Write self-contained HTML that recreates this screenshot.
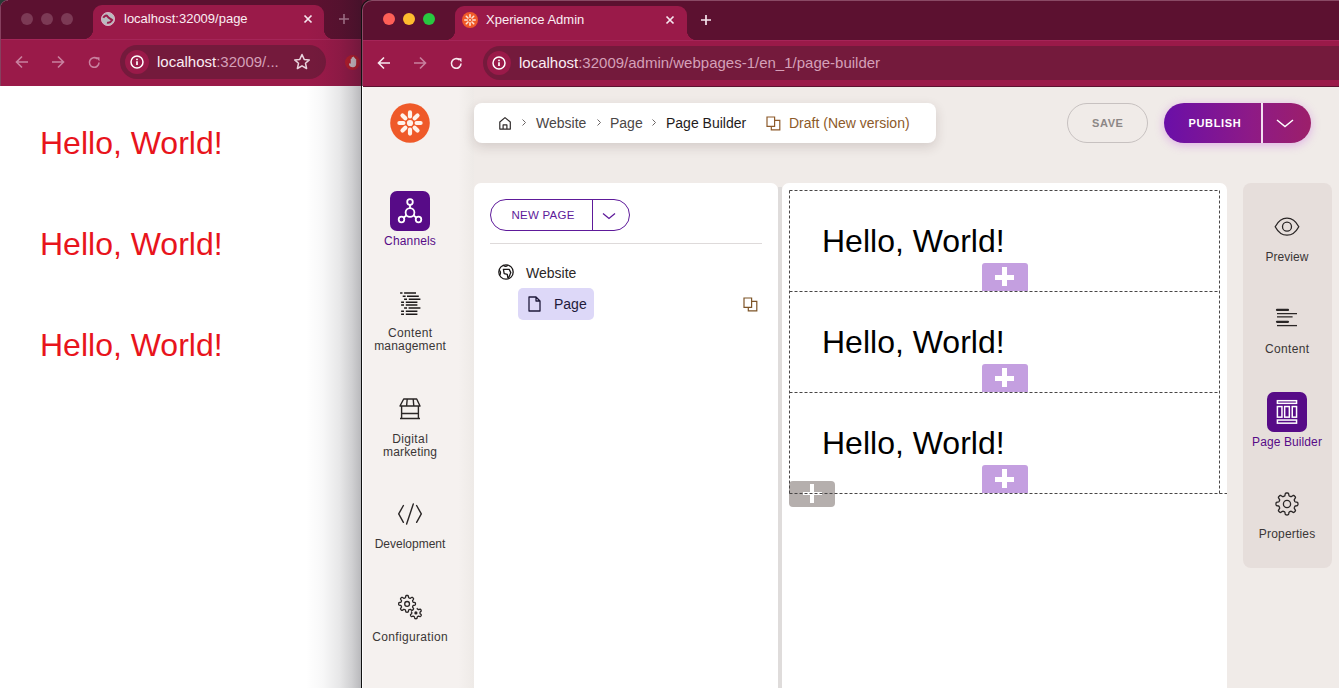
<!DOCTYPE html>
<html><head><meta charset="utf-8">
<style>
*{box-sizing:border-box;margin:0;padding:0}
html,body{width:1339px;height:688px;overflow:hidden;background:#fff;font-family:"Liberation Sans",sans-serif}
.abs{position:absolute}
.t{position:absolute;white-space:nowrap;font-family:"Liberation Sans",sans-serif}
svg{position:absolute;overflow:visible}
</style></head><body>

<!-- ============ LEFT WINDOW ============ -->
<div class="abs" id="lw" style="left:0;top:0;width:380px;height:688px;overflow:hidden">
  <div class="abs" style="left:0;top:0;width:380px;height:39px;background:#5c1130"></div>
  <!-- traffic (inactive) -->
  <div class="abs" style="left:21px;top:13px;width:12px;height:12px;border-radius:50%;background:#7c3a55"></div>
  <div class="abs" style="left:41px;top:13px;width:12px;height:12px;border-radius:50%;background:#7c3a55"></div>
  <div class="abs" style="left:61px;top:13px;width:12px;height:12px;border-radius:50%;background:#7c3a55"></div>
  <!-- active tab -->
  <div class="abs" style="left:93px;top:5px;width:231px;height:35px;background:#9a1a49;border-radius:9px 9px 0 0"></div>
  <div class="abs" style="left:83px;top:29px;width:10px;height:10px;background:radial-gradient(circle at 0 0,#5c1130 10px,#9a1a49 10.5px)"></div>
  <div class="abs" style="left:324px;top:29px;width:10px;height:10px;background:radial-gradient(circle at 100% 0,#5c1130 10px,#9a1a49 10.5px)"></div>
  <svg style="left:100px;top:11px" width="16" height="16" viewBox="0 0 16 16"><circle cx="8" cy="8" r="6.6" fill="#b9bcc0" stroke="#d9a9bd" stroke-width="1"/><path d="M3.3 6.8C4.5 4.6 6.5 3.8 7.6 5.6C8.4 7 10 7.4 12.2 9C11 11 9.4 12.2 7 11.6" stroke="#9a1a49" stroke-width="2" fill="none" stroke-linejoin="round"/></svg>
  <div class="t" style="left:124px;top:11px;font-size:13px;color:#fbeef3">localhost:32009/page</div>
  <svg style="left:304px;top:15px" width="8" height="8" viewBox="0 0 8 8"><path d="M0.5 0.5L7.5 7.5M7.5 0.5L0.5 7.5" stroke="#f6e6ee" stroke-width="1.7"/></svg>
  <svg style="left:339px;top:14px" width="10" height="10" viewBox="0 0 10 10"><path d="M5 0V10M0 5H10" stroke="#b07b92" stroke-width="1.6"/></svg>
  <!-- toolbar -->
  <div class="abs" style="left:0;top:39px;width:380px;height:47px;background:#9a1a49"></div><div class="abs" style="left:0;top:39px;width:380px;height:1px;background:#a52558"></div>
  <svg style="left:15px;top:55px" width="14" height="14" viewBox="0 0 14 14"><path d="M13 7H1.5M7 1.5L1.5 7L7 12.5" stroke="#c9819f" stroke-width="1.6" fill="none"/></svg>
  <svg style="left:51px;top:55px" width="14" height="14" viewBox="0 0 14 14"><path d="M1 7H12.5M7 1.5L12.5 7L7 12.5" stroke="#c9819f" stroke-width="1.6" fill="none"/></svg>
  <svg style="left:88px;top:56px" width="13" height="13" viewBox="0 0 13 13"><path d="M11 6.5A4.8 4.8 0 1 1 9.3 2.8" stroke="#c9819f" stroke-width="1.6" fill="none"/><path d="M7.5 1.2H11.5V5.2Z" fill="#c9819f"/></svg>
  <div class="abs" style="left:120px;top:45px;width:206px;height:33.5px;border-radius:17px;background:#741a3c"></div>
  <div class="abs" style="left:125px;top:50px;width:24px;height:24px;border-radius:50%;background:#9a1a49"></div>
  <svg style="left:129px;top:54px" width="16" height="16" viewBox="0 0 16 16"><circle cx="8" cy="8" r="6" stroke="#fff" stroke-width="1.5" fill="none"/><circle cx="8" cy="5.4" r="0.9" fill="#fff"/><path d="M8 7.2V11" stroke="#fff" stroke-width="1.7"/></svg>
  <div class="t" style="left:157px;top:53px;font-size:15px;color:#fbeef3">localhost<span style="color:#d5a0b8">:32009/...</span></div>
  <svg style="left:293px;top:53px" width="18" height="18" viewBox="0 0 18 18"><path d="M9 1.5L11.2 6.4L16.3 6.9L12.5 10.3L13.6 15.5L9 12.8L4.4 15.5L5.5 10.3L1.7 6.9L6.8 6.4Z" stroke="#ead4de" stroke-width="1.5" fill="none" stroke-linejoin="round"/></svg>
  <div class="abs" style="left:344.5px;top:54.6px;width:15.6px;height:15.6px;border-radius:50%;background:#bd1c2c"></div>
  <svg style="left:346px;top:55px" width="14" height="14" viewBox="0 0 14 14"><path d="M4.2 11.5C3.2 10.5 2.6 9 3.4 8.3C3.9 7.9 4.5 8.4 4.7 8.8V4.2C4.7 3.4 5.8 3.4 5.8 4.2V2.6C5.8 1.8 6.9 1.8 6.9 2.6V2.2C6.9 1.4 8 1.4 8 2.2V3C8 2.2 9.1 2.2 9.1 3V4.4C9.1 3.6 10.2 3.6 10.2 4.4V8.8C10.2 11 9 12.2 7.2 12.2C5.8 12.2 4.9 12.1 4.2 11.5Z" fill="#d9c8d0"/></svg>
  <div class="abs" style="left:0;top:6px;width:1px;height:80px;background:#86405f"></div>
  <div class="abs" style="left:0;top:0;width:8px;height:8px;background:radial-gradient(circle at 100% 100%,rgba(0,0,0,0) 7px,#86405f 7.5px,#2a3a36 8.5px)"></div>
  <!-- content -->
  <div class="abs" style="left:0;top:86px;width:362px;height:602px;background:#fff"></div>
  <div class="t" style="left:40px;top:125px;font-size:32px;color:#e8141c">Hello, World!</div>
  <div class="t" style="left:40px;top:226px;font-size:32px;color:#e8141c">Hello, World!</div>
  <div class="t" style="left:40px;top:327px;font-size:32px;color:#e8141c">Hello, World!</div>
  <!-- shadow from right window -->
  <div class="abs" style="left:306px;top:0;width:56px;height:688px;background:linear-gradient(to right,rgba(20,20,30,0),rgba(20,20,30,0.03) 30%,rgba(20,20,30,0.10) 60%,rgba(20,20,30,0.2) 82%,rgba(20,20,30,0.31))"></div>
</div>

<!-- ============ RIGHT WINDOW ============ -->
<div class="abs" id="rw" style="left:361px;top:-1px;width:978px;height:690px;overflow:hidden;border-top-left-radius:11px;background:#111">
 <div class="abs" style="left:1px;top:1px;width:977px;height:689px;overflow:hidden;border-top-left-radius:10px;background:linear-gradient(#8a4a65 0,#8a4a65 86px,#fff 86px)">
 <div class="abs" style="left:1px;top:1px;width:976px;height:688px;overflow:hidden;border-top-left-radius:9px;background:#5c1130">
  <!-- coordinates inside: x = page - 363, y = page - 1 -->
  <div class="abs" style="left:20px;top:12px;width:12px;height:12px;border-radius:50%;background:#fe5f57"></div>
  <div class="abs" style="left:40px;top:12px;width:12px;height:12px;border-radius:50%;background:#febc2e"></div>
  <div class="abs" style="left:60px;top:12px;width:12px;height:12px;border-radius:50%;background:#28c840"></div>
  <!-- active tab -->
  <div class="abs" style="left:92px;top:5px;width:232px;height:35px;background:#9a1a49;border-radius:9px 9px 0 0"></div>
  <div class="abs" style="left:82px;top:29px;width:10px;height:10px;background:radial-gradient(circle at 0 0,#5c1130 10px,#9a1a49 10.5px)"></div>
  <div class="abs" style="left:324px;top:29px;width:10px;height:10px;background:radial-gradient(circle at 100% 0,#5c1130 10px,#9a1a49 10.5px)"></div>
  <svg style="left:99px;top:11px" width="16" height="16" viewBox="0 0 16 16"><circle cx="8" cy="8" r="8" fill="#f05a28"/><g stroke="#fde3d3" stroke-width="1.6" stroke-linecap="round"><path d="M8 2.8V5.2M8 10.8V13.2M2.8 8H5.2M10.8 8H13.2M4.3 4.3L6 6M10 10L11.7 11.7M11.7 4.3L10 6M6 10L4.3 11.7"/></g><circle cx="8" cy="8" r="1" fill="#fde3d3"/></svg>
  <div class="t" style="left:123px;top:11px;font-size:13px;color:#fbeef3">Xperience Admin</div>
  <svg style="left:303px;top:15px" width="8" height="8" viewBox="0 0 8 8"><path d="M0.5 0.5L7.5 7.5M7.5 0.5L0.5 7.5" stroke="#f6e6ee" stroke-width="1.7"/></svg>
  <svg style="left:338px;top:14px" width="10" height="10" viewBox="0 0 10 10"><path d="M5 0V10M0 5H10" stroke="#f6e6ee" stroke-width="1.7"/></svg>
  <!-- toolbar -->
  <div class="abs" style="left:0;top:39px;width:976px;height:46px;background:#9a1a49"></div><div class="abs" style="left:0;top:39px;width:976px;height:1px;background:#a52558"></div>
  <svg style="left:14px;top:55px" width="14" height="14" viewBox="0 0 14 14"><path d="M13 7H1.5M7 1.5L1.5 7L7 12.5" stroke="#f8e9ef" stroke-width="1.6" fill="none"/></svg>
  <svg style="left:50px;top:55px" width="14" height="14" viewBox="0 0 14 14"><path d="M1 7H12.5M7 1.5L12.5 7L7 12.5" stroke="#c9819f" stroke-width="1.6" fill="none"/></svg>
  <svg style="left:87px;top:56px" width="13" height="13" viewBox="0 0 13 13"><path d="M11 6.5A4.8 4.8 0 1 1 9.3 2.8" stroke="#f8e9ef" stroke-width="1.6" fill="none"/><path d="M7.5 1.2H11.5V5.2Z" fill="#f8e9ef"/></svg>
  <div class="abs" style="left:120px;top:45px;width:900px;height:34px;border-radius:17px;background:#741a3c"></div>
  <div class="abs" style="left:124px;top:50px;width:24px;height:24px;border-radius:50%;background:#9a1a49"></div>
  <svg style="left:128px;top:54px" width="16" height="16" viewBox="0 0 16 16"><circle cx="8" cy="8" r="6" stroke="#fff" stroke-width="1.5" fill="none"/><circle cx="8" cy="5.4" r="0.9" fill="#fff"/><path d="M8 7.2V11" stroke="#fff" stroke-width="1.7"/></svg>
  <div class="t" style="left:156px;top:53px;font-size:15px;color:#fbeef3">localhost<span style="color:#d5a0b8">:32009/admin/webpages-1/en_1/page-builder</span></div>

  <!-- admin content -->
  <div class="abs" id="adm" style="left:0;top:86px;width:976px;height:601px;background:#f0ebe8;overflow:hidden">
   <!-- adm coords: x = page-363, y = page-87 -->
   <div class="abs" style="left:0;top:0;width:111px;height:601px;background:linear-gradient(to right,#f5f1ef 0,#f5f1ef 86%,#eeeae7 100%)"></div>
   <!-- logo -->
   <svg style="left:27px;top:15.5px" width="40" height="40" viewBox="0 0 40 40"><circle cx="20" cy="20" r="19.8" fill="#ef5a29"/><path d="M20.00 13.40L20.00 9.40M24.67 15.33L27.50 12.50M26.60 20.00L30.60 20.00M24.67 24.67L27.50 27.50M20.00 26.60L20.00 30.60M15.33 24.67L12.50 27.50M13.40 20.00L9.40 20.00M15.33 15.33L12.50 12.50" stroke="#fff3ea" stroke-width="4.2" stroke-linecap="round"/><circle cx="20" cy="20" r="3.1" fill="#fff3ea"/></svg>
   <!-- breadcrumb card -->
   <div class="abs" style="left:111px;top:16px;width:462px;height:40px;background:#fff;border-radius:8px;box-shadow:0 4px 12px rgba(60,40,40,0.16)"></div>
   <svg style="left:135px;top:29px" width="14" height="14" viewBox="0 0 14 14"><path d="M1.8 6L7 1.6L12.3 6V13.1H1.8Z M5.1 13.1V8.9H8.9V13.1" stroke="#2e2a2a" stroke-width="1.2" fill="none" stroke-linejoin="round"/></svg>
   <svg style="left:158px;top:31px" width="6" height="9" viewBox="0 0 6 9"><path d="M1.5 1.5L4.5 4.5L1.5 7.5" stroke="#6a6565" stroke-width="1" fill="none"/></svg>
   <div class="t" style="left:173px;top:28px;font-size:14px;color:#4a4646">Website</div>
   <svg style="left:233px;top:31px" width="6" height="9" viewBox="0 0 6 9"><path d="M1.5 1.5L4.5 4.5L1.5 7.5" stroke="#6a6565" stroke-width="1" fill="none"/></svg>
   <div class="t" style="left:247px;top:28px;font-size:14px;color:#4a4646">Page</div>
   <svg style="left:288px;top:31px" width="6" height="9" viewBox="0 0 6 9"><path d="M1.5 1.5L4.5 4.5L1.5 7.5" stroke="#6a6565" stroke-width="1" fill="none"/></svg>
   <div class="t" style="left:303px;top:28px;font-size:14px;color:#1e1b1b">Page Builder</div>
   <svg style="left:403px;top:29px" width="15" height="15" viewBox="0 0 15 15"><path d="M1 1H8.6V10.3H1Z M8.6 4.3H13.8V13.8H5.3V10.3" stroke="#8d5a2a" stroke-width="1.2" fill="none"/></svg>
   <div class="t" style="left:426px;top:28px;font-size:14px;color:#8d5a2a">Draft (New version)</div>
   <!-- SAVE -->
   <div class="abs" style="left:704px;top:16px;width:81px;height:40px;border:1px solid #c7c1c0;border-radius:20px"></div>
   <div class="t" style="left:729px;top:30px;font-size:11px;font-weight:700;color:#8c8786;letter-spacing:0.6px">SAVE</div>
   <!-- PUBLISH -->
   <div class="abs" style="left:801px;top:16px;width:147px;height:40px;border-radius:20px;background:linear-gradient(to right,#6a0fa8,#8e1a86 60%,#9c1f6a);box-shadow:0 2px 10px rgba(190,60,220,0.35)"></div>
   <div class="abs" style="left:898px;top:16px;width:1.5px;height:40px;background:#f3dff0"></div>
   <div class="t" style="left:825.5px;top:30px;font-size:11px;font-weight:700;color:#fff;letter-spacing:0.65px">PUBLISH</div>
   <svg style="left:913px;top:32px" width="18" height="9" viewBox="0 0 18 9"><path d="M1 1L9 7.5L17 1" stroke="#fff" stroke-width="1.5" fill="none"/></svg>

   <!-- LEFT NAV -->
   <div class="abs" style="left:27px;top:104px;width:40px;height:40px;border-radius:7px;background:#570b87"></div>
   <svg style="left:27px;top:104px" width="40" height="40" viewBox="0 0 40 40"><g stroke="#fff" stroke-width="1.8" fill="none"><circle cx="20" cy="21.5" r="4.4"/><circle cx="20" cy="11" r="2.8"/><circle cx="11.5" cy="28.5" r="2.8"/><circle cx="28.5" cy="28.5" r="2.8"/><path d="M20 13.8V17.1M13.6 26.8L16.6 24.3M26.4 26.8L23.4 24.3"/></g></svg>
   <div class="t" style="left:-3px;top:147px;width:100px;text-align:center;font-size:12px;color:#570b87;letter-spacing:0.15px;text-indent:0.15px">Channels</div>

   <svg style="left:33px;top:202px" width="28" height="28" viewBox="0 0 28 28"><g stroke="#1c1919" stroke-width="1.5" fill="none"><path d="M4.1 4.1H6.5M8.1 4.1H20.0"/><path d="M6.7 7.2H9.6M11.0 7.2H22.8"/><path d="M8.1 10.2H11.0M12.8 10.2H24.4"/><path d="M5.1 13.2H8.0M9.8 13.2H21.4"/><path d="M5.1 16.1H8.0M9.8 16.1H21.4"/><path d="M8.1 19.1H11.0M12.6 19.1H24.4"/><path d="M5.1 22.2H8.0M9.8 22.2H21.4"/><path d="M5.1 25.2H8.0M9.8 25.2H21.4"/></g></svg>
   <div class="t" style="left:-3px;top:239px;width:100px;text-align:center;font-size:12px;color:#3a3636;letter-spacing:0.35px;text-indent:0.35px">Content</div>
   <div class="t" style="left:-3px;top:252px;width:100px;text-align:center;font-size:12px;color:#3a3636;letter-spacing:0.18px;text-indent:0.18px">management</div>

   <svg style="left:36px;top:311px" width="22" height="22" viewBox="0 0 22 22"><g stroke="#2a2626" stroke-width="1.4" fill="none" stroke-linejoin="round"><path d="M4.7 1H17.7L21 8H1Z"/><path d="M8.2 1L7.6 8M14.2 1L14.8 8"/><path d="M2.6 8V20.5M19.4 8V20.5M2.6 15.5H19.4M1 20.5H21"/></g></svg>
   <div class="t" style="left:-3px;top:345px;width:100px;text-align:center;font-size:12px;color:#3a3636;letter-spacing:0.38px;text-indent:0.38px">Digital</div>
   <div class="t" style="left:-3px;top:358px;width:100px;text-align:center;font-size:12px;color:#3a3636;letter-spacing:0.17px;text-indent:0.17px">marketing</div>

   <svg style="left:35px;top:417px" width="24" height="22" viewBox="0 0 24 22"><g stroke="#2a2626" stroke-width="1.4" fill="none" stroke-linejoin="round" stroke-linecap="round"><path d="M5.4 1.5L0.7 9.9L5.4 18.3M18.6 1.5L23.3 9.9L18.6 18.3M15.3 0L8.6 20"/></g></svg>
   <div class="t" style="left:-3px;top:450px;width:100px;text-align:center;font-size:12px;color:#3a3636;letter-spacing:0px;text-indent:0px">Development</div>

   <svg style="left:33px;top:506px" width="28" height="28" viewBox="0 0 28 28"><g stroke="#2a2626" stroke-width="1.3" fill="none" stroke-linejoin="round"><path d="M19.5 10.9 L19.4 11.3 L19.4 11.7 L19.1 12.0 L18.2 12.3 L17.3 12.4 L17.0 12.7 L16.9 12.9 L16.8 13.2 L16.7 13.5 L16.6 13.8 L16.6 14.2 L17.1 14.9 L17.6 15.7 L17.5 16.2 L17.3 16.5 L17.0 16.8 L16.7 17.1 L16.4 17.3 L15.9 17.4 L15.1 16.9 L14.4 16.4 L14.0 16.4 L13.7 16.5 L13.4 16.6 L13.1 16.7 L12.9 16.8 L12.6 17.1 L12.5 18.0 L12.2 18.9 L11.9 19.2 L11.5 19.2 L11.1 19.3 L10.6 19.2 L10.2 19.2 L9.9 18.9 L9.6 18.0 L9.5 17.1 L9.2 16.8 L9.0 16.7 L8.7 16.6 L8.4 16.5 L8.1 16.4 L7.7 16.4 L7.0 16.9 L6.2 17.4 L5.8 17.3 L5.4 17.1 L5.1 16.8 L4.8 16.5 L4.6 16.2 L4.5 15.7 L5.0 14.9 L5.5 14.2 L5.5 13.8 L5.4 13.5 L5.3 13.2 L5.2 12.9 L5.1 12.7 L4.8 12.4 L3.9 12.3 L3.0 12.0 L2.7 11.7 L2.7 11.3 L2.7 10.9 L2.7 10.4 L2.7 10.0 L3.0 9.7 L3.9 9.4 L4.8 9.3 L5.1 9.0 L5.2 8.8 L5.3 8.5 L5.4 8.2 L5.5 7.9 L5.5 7.5 L5.0 6.8 L4.5 6.0 L4.6 5.6 L4.8 5.2 L5.1 4.9 L5.4 4.6 L5.8 4.4 L6.2 4.3 L7.0 4.8 L7.7 5.3 L8.1 5.3 L8.4 5.2 L8.7 5.1 L9.0 5.0 L9.2 4.9 L9.5 4.6 L9.6 3.7 L9.9 2.8 L10.2 2.5 L10.6 2.5 L11.1 2.5 L11.5 2.5 L11.9 2.5 L12.2 2.8 L12.5 3.7 L12.6 4.6 L12.9 4.9 L13.1 5.0 L13.4 5.1 L13.7 5.2 L14.0 5.3 L14.4 5.3 L15.1 4.8 L15.9 4.3 L16.4 4.4 L16.7 4.6 L17.0 4.9 L17.3 5.2 L17.5 5.6 L17.6 6.0 L17.1 6.8 L16.6 7.5 L16.6 7.9 L16.7 8.2 L16.8 8.5 L16.9 8.8 L17.0 9.0 L17.3 9.3 L18.2 9.4 L19.1 9.7 L19.4 10.0 L19.4 10.4 L19.5 10.9Z"/><circle cx="11.1" cy="10.9" r="2.4"/><path d="M21.1 15.0 L21.3 15.7 L21.4 16.0 L21.7 16.2 L21.9 16.3 L22.1 16.4 L22.4 16.6 L22.7 16.6 L23.4 16.3 L24.1 16.1 L24.5 16.3 L24.8 16.6 L25.0 16.9 L25.1 17.2 L25.3 17.6 L25.2 18.0 L24.7 18.6 L24.1 19.0 L24.0 19.3 L24.0 19.6 L24.0 19.9 L24.0 20.1 L24.0 20.4 L24.1 20.7 L24.7 21.1 L25.2 21.7 L25.3 22.1 L25.1 22.5 L25.0 22.8 L24.8 23.1 L24.5 23.4 L24.1 23.6 L23.4 23.4 L22.7 23.1 L22.4 23.2 L22.1 23.3 L21.9 23.4 L21.7 23.5 L21.4 23.7 L21.3 24.0 L21.1 24.7 L21.0 25.4 L20.6 25.6 L20.2 25.7 L19.9 25.8 L19.5 25.7 L19.1 25.6 L18.8 25.4 L18.6 24.7 L18.5 24.0 L18.3 23.7 L18.0 23.5 L17.8 23.4 L17.6 23.3 L17.3 23.2 L17.0 23.1 L16.3 23.4 L15.6 23.6 L15.2 23.4 L15.0 23.1 L14.7 22.8 L14.6 22.5 L14.5 22.1 L14.5 21.7 L15.0 21.1 L15.6 20.7 L15.7 20.4 L15.8 20.1 L15.8 19.9 L15.8 19.6 L15.7 19.3 L15.6 19.0 L15.0 18.6"/></g><circle cx="19.9" cy="19.9" r="1.6" fill="#2a2626"/></svg>
   <div class="t" style="left:-3px;top:543px;width:100px;text-align:center;font-size:12px;color:#3a3636;letter-spacing:0.33px;text-indent:0.33px">Configuration</div>

   <!-- LEFT PANEL -->
   <div class="abs" style="left:111px;top:96px;width:304px;height:520px;background:#fff;border-radius:7px 7px 0 0"></div>
   <div class="abs" style="left:415px;top:100px;width:4px;height:520px;background:#dfdcdb"></div>
   <div class="abs" style="left:127px;top:112px;width:140px;height:32px;border:1.3px solid #5e1a9a;border-radius:16px"></div>
   <div class="abs" style="left:229px;top:112px;width:1.3px;height:32px;background:#5e1a9a"></div>
   <div class="t" style="left:148.5px;top:121.5px;font-size:11.5px;color:#5e1a9a;letter-spacing:0.25px">NEW PAGE</div>
   <svg style="left:239px;top:125px" width="14" height="8" viewBox="0 0 14 8"><path d="M1 1.5L7 6.5L13 1.5" stroke="#5e1a9a" stroke-width="1.3" fill="none"/></svg>
   <div class="abs" style="left:127px;top:156px;width:272px;height:1px;background:#dedada"></div>
   <svg style="left:135px;top:177px" width="16" height="16" viewBox="0 0 16 16"><g stroke="#1c1919" stroke-width="1.3" fill="none" stroke-linejoin="round"><circle cx="8" cy="8" r="7.2"/><path d="M5.4 5.4H11.2L12.8 8.6L10.9 13.3L9.8 13.6L9.3 10.4L6.2 9.6Z"/><path d="M1.3 6.2C2.8 7.2 2.9 9.8 1.6 11.3"/><path d="M5.3 1.1C6.2 2.6 8.2 2.8 9.8 1.2"/></g></svg>
   <div class="t" style="left:163px;top:178px;font-size:14px;color:#2b2727">Website</div>
   <div class="abs" style="left:155px;top:201.3px;width:75.5px;height:31.6px;border-radius:5px;background:#ddd8f8"></div>
   <svg style="left:165px;top:209px" width="13" height="16" viewBox="0 0 13 16"><path d="M1 1H8L12 5V15H1Z M8 1V5H12" stroke="#1f1a3a" stroke-width="1.3" fill="none" stroke-linejoin="round"/></svg>
   <div class="t" style="left:191px;top:209px;font-size:14px;color:#1f1a3a">Page</div>
   <svg style="left:380px;top:210px" width="15" height="15" viewBox="0 0 15 15"><path d="M1 1H8.6V10.3H1Z M8.6 4.3H13.8V13.8H5.3V10.3" stroke="#7d5427" stroke-width="1.2" fill="none"/></svg>

   <!-- CANVAS -->
   <div class="abs" style="left:419px;top:96px;width:445px;height:520px;background:#fff;border-radius:7px 7px 0 0"></div>
   <div class="t" style="left:459px;top:136px;font-size:32px;color:#000">Hello, World!</div><div class="t" style="left:459px;top:237px;font-size:32px;color:#000">Hello, World!</div><div class="t" style="left:459px;top:338px;font-size:32px;color:#000">Hello, World!</div><div class="abs" style="left:619px;top:176px;width:46px;height:28px;border-radius:3px 3px 0 0;background:#c49fe0"></div><div class="abs" style="left:632px;top:188px;width:19px;height:4.5px;background:#fff"></div><div class="abs" style="left:639.2px;top:180px;width:4.6px;height:18.7px;background:#fff"></div><div class="abs" style="left:619px;top:277px;width:46px;height:28px;border-radius:3px 3px 0 0;background:#c49fe0"></div><div class="abs" style="left:632px;top:289px;width:19px;height:4.5px;background:#fff"></div><div class="abs" style="left:639.2px;top:281px;width:4.6px;height:18.7px;background:#fff"></div><div class="abs" style="left:619px;top:378px;width:46px;height:28px;border-radius:3px 3px 0 0;background:#c49fe0"></div><div class="abs" style="left:632px;top:390px;width:19px;height:4.5px;background:#fff"></div><div class="abs" style="left:639.2px;top:382px;width:4.6px;height:18.7px;background:#fff"></div><div class="abs" style="left:426px;top:394px;width:46px;height:25.5px;border-radius:4px;background:#b5afad"></div><div class="abs" style="left:439.5px;top:405.2px;width:19px;height:3.2px;background:#fff"></div><div class="abs" style="left:447.2px;top:397px;width:4px;height:19px;background:#fff"></div><svg style="left:0;top:0" width="976" height="601" viewBox="0 0 976 601"><g stroke="#484646" stroke-width="1" stroke-dasharray="3 2" fill="none"><path d="M426.5 103.5H856.5"/><path d="M426.5 204.5H856.5"/><path d="M426.5 305.5H856.5"/><path d="M426.5 406.5H864"/><path d="M426.5 103.5V406.5"/><path d="M856.5 103.5V406.5"/></g></svg>

   <!-- RIGHT PANEL -->
   <div class="abs" style="left:880px;top:96px;width:89px;height:385px;background:#e6dedb;border-radius:8px"></div>
   <svg style="left:910px;top:130px" width="28" height="20" viewBox="0 0 28 20"><g stroke="#2a2626" stroke-width="1.3" fill="none"><path d="M2.2 9.7C5 4.5 9 1.2 14 1.2C19 1.2 23 4.5 25.8 9.7C23 14.9 19 18.2 14 18.2C9 18.2 5 14.9 2.2 9.7Z"/><circle cx="14" cy="9.7" r="4.5"/></g></svg>
   <div class="t" style="left:874px;top:163px;width:100px;text-align:center;font-size:12px;color:#3a3636;letter-spacing:0.05px;text-indent:0.05px">Preview</div>
   <svg style="left:912px;top:218px" width="24" height="24" viewBox="0 0 24 24"><g stroke="#2a2626" fill="none"><path d="M2 4.9H13" stroke-width="2.2" stroke-linecap="round"/><path d="M2 8.7H22M2 11.9H17.6" stroke-width="1.3"/><path d="M2 16.8H13" stroke-width="2.2" stroke-linecap="round"/><path d="M2 20.6H22" stroke-width="1.3"/></g></svg>
   <div class="t" style="left:874px;top:255px;width:100px;text-align:center;font-size:12px;color:#3a3636;letter-spacing:0.35px;text-indent:0.35px">Content</div>
   <div class="abs" style="left:904px;top:305px;width:40px;height:40px;border-radius:7px;background:#570b87"></div>
   <svg style="left:904px;top:305px" width="40" height="40" viewBox="0 0 40 40"><g stroke="#fff" stroke-width="1.5" fill="none"><rect x="10.4" y="8.7" width="19.15" height="2.65"/><rect x="10.4" y="14.55" width="4.55" height="10.6"/><rect x="17.65" y="14.55" width="4.7" height="10.6"/><rect x="25.25" y="14.55" width="4.3" height="10.6"/><rect x="10.4" y="28.05" width="19.15" height="3.1"/></g></svg>
   <div class="t" style="left:874px;top:348px;width:100px;text-align:center;font-size:12px;color:#570b87;letter-spacing:0.1px;text-indent:0.1px">Page Builder</div>
   <svg style="left:912px;top:405px" width="24" height="24" viewBox="0 0 24 24"><g stroke="#2a2626" stroke-width="1.3" fill="none" stroke-linejoin="round"><path d="M23.0 12.0 L22.9 12.5 L22.8 13.0 L22.5 13.5 L21.4 13.8 L20.2 14.0 L19.9 14.4 L19.7 14.7 L19.5 15.1 L19.4 15.5 L19.2 15.8 L19.3 16.3 L19.9 17.3 L20.5 18.3 L20.4 18.9 L20.1 19.3 L19.7 19.7 L19.3 20.1 L18.9 20.4 L18.3 20.5 L17.3 19.9 L16.3 19.3 L15.8 19.2 L15.5 19.4 L15.1 19.5 L14.7 19.7 L14.4 19.9 L14.0 20.2 L13.8 21.4 L13.5 22.5 L13.0 22.8 L12.5 22.9 L12.0 23.0 L11.4 22.9 L10.9 22.8 L10.4 22.5 L10.1 21.4 L9.9 20.2 L9.6 19.9 L9.2 19.7 L8.8 19.5 L8.4 19.4 L8.1 19.2 L7.6 19.3 L6.6 19.9 L5.6 20.5 L5.0 20.4 L4.6 20.1 L4.2 19.7 L3.8 19.3 L3.5 18.9 L3.4 18.3 L4.0 17.3 L4.6 16.3 L4.7 15.8 L4.5 15.5 L4.4 15.1 L4.2 14.7 L4.0 14.4 L3.7 14.0 L2.5 13.8 L1.4 13.5 L1.1 13.0 L1.0 12.5 L1.0 12.0 L1.0 11.4 L1.1 10.9 L1.4 10.4 L2.5 10.1 L3.7 9.9 L4.0 9.6 L4.2 9.2 L4.4 8.8 L4.5 8.4 L4.7 8.1 L4.6 7.6 L4.0 6.6 L3.4 5.6 L3.5 5.0 L3.8 4.6 L4.2 4.2 L4.6 3.8 L5.0 3.5 L5.6 3.4 L6.6 4.0 L7.6 4.6 L8.1 4.7 L8.4 4.5 L8.8 4.4 L9.2 4.2 L9.6 4.0 L9.9 3.7 L10.1 2.5 L10.4 1.4 L10.9 1.1 L11.4 1.0 L12.0 1.0 L12.5 1.0 L13.0 1.1 L13.5 1.4 L13.8 2.5 L14.0 3.7 L14.4 4.0 L14.7 4.2 L15.1 4.4 L15.5 4.5 L15.8 4.7 L16.3 4.6 L17.3 4.0 L18.3 3.4 L18.9 3.5 L19.3 3.8 L19.7 4.2 L20.1 4.6 L20.4 5.0 L20.5 5.6 L19.9 6.6 L19.3 7.6 L19.2 8.1 L19.4 8.4 L19.5 8.8 L19.7 9.2 L19.9 9.6 L20.2 9.9 L21.4 10.1 L22.5 10.4 L22.8 10.9 L22.9 11.4 L23.0 12.0Z"/><circle cx="12" cy="12" r="3.6"/></g></svg>
   <div class="t" style="left:874px;top:440px;width:100px;text-align:center;font-size:12px;color:#3a3636;letter-spacing:0.2px;text-indent:0.2px">Properties</div>
  </div>
 </div>
 </div>
</div>

</body></html>
